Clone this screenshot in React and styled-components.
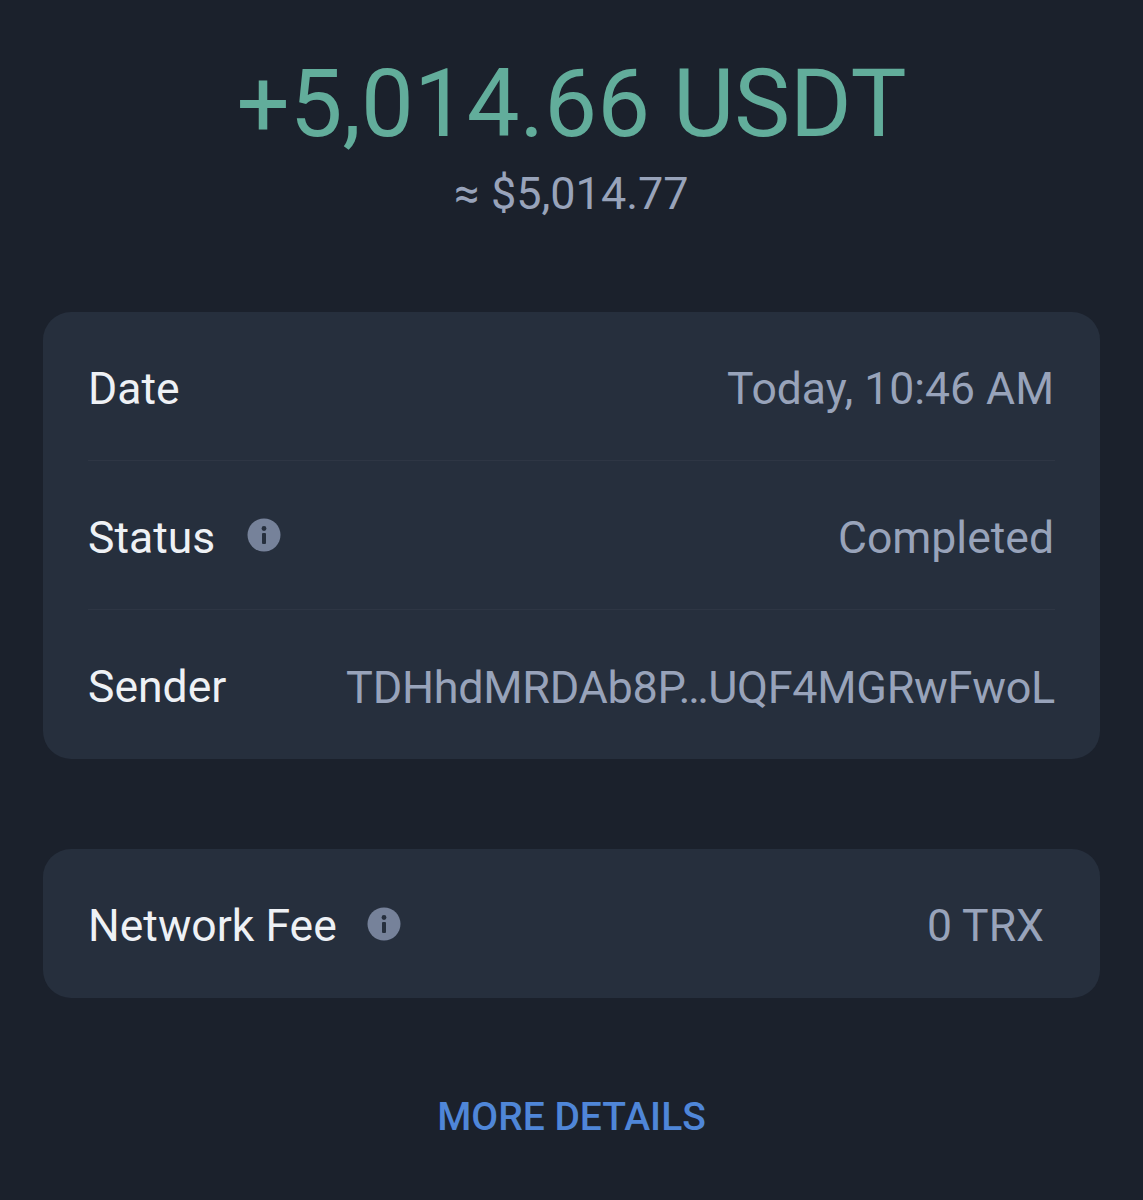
import React from 'react'
import styled, { createGlobalStyle } from 'styled-components'

const GlobalStyle = createGlobalStyle`
  html, body {
    margin: 0;
    padding: 0;
    background: #1b212c;
  }
`

const Screen = styled.div`
  width: 1143px;
  height: 1200px;
  overflow: hidden;
  box-sizing: border-box;
  padding: 50px 43px 0 43px;
  display: flex;
  flex-direction: column;
  background: #1b212c;
  font-family: Roboto, "Liberation Sans", sans-serif;
`

const Amount = styled.div`
  text-align: center;
  font-size: 94px;
  line-height: 108px;
  color: #62ad9b;
`

const Fiat = styled.div`
  margin-top: 11px;
  text-align: center;
  font-size: 45px;
  line-height: 50px;
  color: #98a3ba;
`

const Card = styled.div`
  background: #262f3d;
  border-radius: 28px;
  padding: 0 45px;
  margin-top: ${p => p.$top}px;
`

const Row = styled.div`
  height: 149px;
  padding-top: 5px;
  display: flex;
  align-items: center;
  justify-content: space-between;
  border-bottom: ${p => (p.$line ? '1px solid #2e3644' : 'none')};
  box-sizing: border-box;
`

const Label = styled.div`
  display: flex;
  align-items: center;
  gap: ${p => p.$gap || 32}px;
  font-size: 44.5px;
  color: #eef1f5;
`

const Value = styled.div`
  font-size: 44.5px;
  color: #98a3ba;
  padding-right: ${p => p.$pad || 1}px;
`

const Address = styled(Value)`
  font-size: 45px;
  letter-spacing: -0.3px;
  padding-right: 0;
`

const InfoIcon = styled.svg`
  width: 34px;
  height: 34px;
  flex: none;
  margin-top: -5px;
`

const MoreButton = styled.div`
  margin-top: 97px;
  text-align: center;
  font-size: 39px;
  line-height: 44px;
  font-weight: 500;
  color: #4f86d8;
`

const Info = () => (
  <InfoIcon viewBox="0 0 34 34">
    <circle cx="17" cy="17" r="16.5" fill="#76829a" />
    <circle cx="17" cy="10.5" r="2.4" fill="#262f3d" />
    <rect x="15" y="15" width="4" height="11" rx="1" fill="#262f3d" />
  </InfoIcon>
)

export default function App() {
  return (
    <Screen>
      <GlobalStyle />
      <Amount>+5,014.66 USDT</Amount>
      <Fiat>≈ $5,014.77</Fiat>
      <Card $top={93}>
        <Row $line>
          <Label>Date</Label>
          <Value>Today, 10:46 AM</Value>
        </Row>
        <Row $line>
          <Label>Status <Info /></Label>
          <Value>Completed</Value>
        </Row>
        <Row>
          <Label>Sender</Label>
          <Address>TDHhdMRDAb8P…UQF4MGRwFwoL</Address>
        </Row>
      </Card>
      <Card $top={90}>
        <Row>
          <Label $gap={30}>Network Fee <Info /></Label>
          <Value $pad={11}>0 TRX</Value>
        </Row>
      </Card>
      <MoreButton>MORE DETAILS</MoreButton>
    </Screen>
  )
}
